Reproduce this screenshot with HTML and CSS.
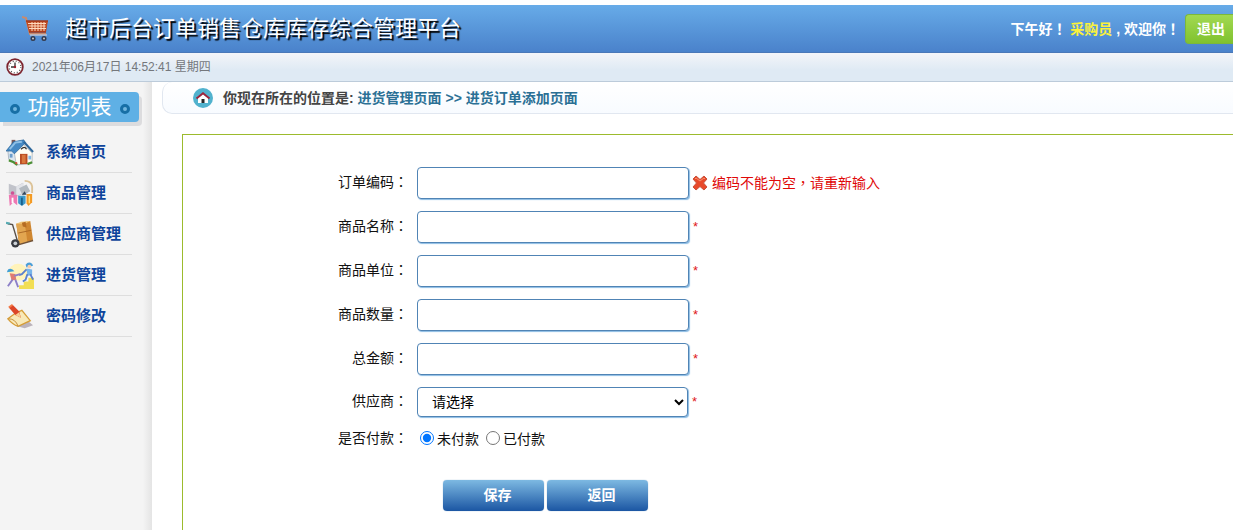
FILE: index.html
```html
<!DOCTYPE html>
<html lang="zh-CN">
<head>
<meta charset="utf-8">
<title>超市后台订单销售仓库库存综合管理平台</title>
<link rel="stylesheet" href="styles.css">
</head>
<body>
<header class="topbar">
  <svg class="cart" viewBox="0 0 28 28" aria-hidden="true">
    <path d="M0 2l4 1 4 16h16" fill="none" stroke="#c98a6d" stroke-width="2"/>
    <path d="M4 6h22l-2 11H7z" fill="#bd4a22"/>
    <path d="M6 8.500h18M6.500 11h17M7 13.500h17M10 7v9M13 7v9M16 7v9M19 7v9M22 7v9" stroke="#ffd9bd" stroke-width="1"/>
    <path d="M4 6h22M7 17h17" stroke="#a63a1b" stroke-width="1.500"/>
    <path d="M8 20h17" stroke="#b9c3d4" stroke-width="1.500"/>
    <circle cx="11" cy="23.500" r="2.500" fill="#33394a"/><circle cx="22" cy="23.500" r="2.500" fill="#33394a"/>
    <circle cx="11" cy="23.500" r="1" fill="#c7cbd5"/><circle cx="22" cy="23.500" r="1" fill="#c7cbd5"/>
  </svg>
  <h1 class="title">超市后台订单销售仓库库存综合管理平台</h1>
  <p class="welcome">下午好<span class="punct" lang="zh-TW">！</span> <span class="user">采购员</span> , 欢迎你<span class="punct" lang="zh-TW">！</span></p>
  <a class="logout" href="#">退出</a>
</header>
<div class="timebar">
  <svg class="clock" viewBox="0 0 18 18" aria-hidden="true">
    <circle cx="9" cy="9" r="7.800" fill="#fff" stroke="#7d2630" stroke-width="1.800"/>
    <circle cx="9" cy="9" r="5.800" fill="none" stroke="#555" stroke-width="1.200" stroke-dasharray="1 2.037"/>
    <path d="M9 4.500V9H5" fill="none" stroke="#333" stroke-width="1.300"/><circle cx="9" cy="9" r="1.200" fill="#a02030"/>
  </svg>
  <time>2021年06月17日 14:52:41 星期四</time>
</div>
<div class="columns">
  <aside class="sidebar">
    <h2 class="menu-title"><span class="dot"></span>功能列表<span class="dot"></span></h2>
    <nav>
      <ul class="menu">
        <li><a href="#">
          <svg class="menu-icon" viewBox="0 0 30 30" aria-hidden="true">
            <path d="M6 2h4v6H6z" fill="#7a5a58"/>
            <path d="M2 14l7-3 5 5v12L3 23z" fill="#dce7f0" stroke="#8293a5" stroke-width=".6"/>
            <path d="M9 16l10-9 9 9v11l-17 2z" fill="#fffdf4" stroke="#9aa0aa" stroke-width=".7"/>
            <path d="M0 14L8 4l11-2 2 3L9 17l-3-3z" fill="#4589c4" stroke="#2a6498" stroke-width=".7"/>
            <path d="M4 12l6-7 7-1" fill="none" stroke="#8fc0e6" stroke-width="2"/>
            <path d="M19 4l10 11" fill="none" stroke="#2d679b" stroke-width="2.200"/>
            <path d="M15 17h8v11h-8z" fill="#b94c22"/><path d="M17 18h4v9h-4z" fill="#d9773d"/>
            <path d="M24 19h3v4h-3z" fill="#83b7e5"/><path d="M4 17h3v4H4z" fill="#6b9dca"/>
            <path d="M3 24q5 1 9 5M23 28l5-2" stroke="#4c9135" stroke-width="2.400" fill="none"/>
            <circle cx="11" cy="27" r="1.200" fill="#d94a37"/><path d="M16 12q4-4 6 0" stroke="#333" stroke-width="1.300" fill="none"/>
          </svg>系统首页</a></li>
        <li><a href="#">
          <svg class="menu-icon" viewBox="0 0 30 30" aria-hidden="true">
            <path d="M3 5l8 3 7-4v12l-7 3-8-3z" fill="#c1c3ca"/><path d="M11 8l8-4v11l-8 3z" fill="#e2e4e9"/>
            <path d="M14 10l8-4 4 7-8 5z" fill="#b3bac0"/><path d="M20 2q7 0 8 6v7" fill="none" stroke="#dcc398" stroke-width="2"/>
            <path d="M3 17h9v11l-4-3-4 4z" fill="#ee79b3"/><path d="M6 20h2v6H6z" fill="#fff"/>
            <circle cx="7" cy="15" r="2" fill="#d15196"/>
            <path d="M13 18h8v8l-4 3-4-3z" fill="#3f9bca"/><path d="M16 20h2v8h-2z" fill="#17608d"/>
            <path d="M22 16h6v9l-4 4-2-3z" fill="#f49a24"/><path d="M25 18v8" stroke="#ffe078" stroke-width="1.500"/>
            <path d="M17 17l3-4 2 4" fill="#33475c"/>
          </svg>商品管理</a></li>
        <li><a href="#">
          <svg class="menu-icon" viewBox="0 0 30 30" aria-hidden="true">
            <path d="M11 4l15-3 3 21-15 4z" fill="#cf8731"/><path d="M11 4l9-1 3 21-9 2z" fill="#e2a650"/>
            <path d="M11 4l5-2 10-1-6 3z" fill="#f1c778"/><path d="M17 3l4-1 1 6-4-1z" fill="#b56c22"/><path d="M13 14l14-3" stroke="#a86524"/>
            <path d="M2 4l5 1 6 20" fill="none" stroke="#5a5149" stroke-width="1.500"/>
            <path d="M0 3l4 1" stroke="#56aab2" stroke-width="2.500"/><path d="M12 27l17-5" stroke="#705238" stroke-width="1.500"/>
            <circle cx="10" cy="25" r="4.500" fill="#383b41"/><circle cx="10" cy="25" r="2" fill="#cbd0d5"/>
          </svg>供应商管理</a></li>
        <li><a href="#">
          <svg class="menu-icon" viewBox="0 0 30 30" aria-hidden="true">
            <ellipse cx="13" cy="12" rx="10" ry="9" fill="#fff3ba"/><path d="M14 30v-4h5v-4h5v-4h6v12z" fill="#f2de54"/>
            <path d="M21 4q3-4 7-1l1 2-7 2z" fill="#4a9fd8"/><circle cx="25" cy="6" r="2" fill="#f6cdb0"/>
            <path d="M22 8l6 1v6l-5 1z" fill="#78b5ea"/>
            <path d="M26 14l3 6M23 14l-2 6-3 2M22 9l-5 5-3 1" stroke="#5b80cd" stroke-width="2" fill="none"/>
            <path d="M1 12q1-5 6-3l2 2z" fill="#43a0d4"/><path d="M4 13l6 1 1 6-5 1z" fill="#e07c72"/>
            <path d="M9 16l6-2M7 20l-5 7M10 20l3 8" stroke="#8d80c8" stroke-width="2" fill="none"/>
          </svg>进货管理</a></li>
        <li><a href="#">
          <svg class="menu-icon" viewBox="0 0 30 30" aria-hidden="true">
            <path d="M12 26l10-7 7 6-9 3z" fill="#bbb3bb"/>
            <path d="M2 18l8-6 7-3 9 11-13 6q-6-2-11-8z" fill="#f8e9b8" stroke="#d69d36" stroke-width="1.400"/>
            <path d="M3 18q7 0 10 8" fill="none" stroke="#c58a35"/>
            <path d="M3 6l4-3 7 7 2 7-6-3z" fill="#dc4528"/><path d="M10 14l4-3 2 6z" fill="#f8ce94"/><path d="M3 6l4-3" stroke="#f37a47" stroke-width="2"/>
          </svg>密码修改</a></li>
      </ul>
    </nav>
  </aside>
  <main class="content">
    <div class="location">
      <svg class="home" viewBox="0 0 20 20" aria-hidden="true">
        <circle cx="10" cy="10" r="10" fill="#51b2ce"/><path d="M5 10l5-4 5 4v5H5z" fill="#fff"/>
        <path d="M3.500 10.500L10 5.300l6.500 5.200" fill="none" stroke="#9e243c" stroke-width="1.900"/><path d="M8.500 11h3v4h-3z" fill="#252525"/>
      </svg>
      <strong>你现在所在的位置是: <span class="path">进货管理页面 &gt;&gt; 进货订单添加页面</span></strong>
    </div>
    <form class="order">
      <div class="row"><label for="code">订单编码<span class="punct" lang="zh-TW">：</span></label><input class="field" id="code" type="text">
        <span class="error"><svg class="cross" viewBox="0 0 16 16" aria-hidden="true"><path d="M4 1l4 3.500L12 1l3 3-3.500 4 3.500 4-3 3-4-3.500L4 15l-3-3 3.500-4L1 4z" fill="#e8492b" stroke="#c9523c" stroke-linejoin="round"/><path d="M3 4l1-1 4 3 4-3 1 1" fill="none" stroke="#f89270"/></svg><span>编码不能为空<span class="punct" lang="zh-TW">，</span>请重新输入</span></span></div>
      <div class="row"><label for="name">商品名称<span class="punct" lang="zh-TW">：</span></label><input class="field" id="name" type="text"><span class="star">*</span></div>
      <div class="row"><label for="unit">商品单位<span class="punct" lang="zh-TW">：</span></label><input class="field" id="unit" type="text"><span class="star">*</span></div>
      <div class="row"><label for="count">商品数量<span class="punct" lang="zh-TW">：</span></label><input class="field" id="count" type="text"><span class="star">*</span></div>
      <div class="row"><label for="total">总金额<span class="punct" lang="zh-TW">：</span></label><input class="field" id="total" type="text"><span class="star">*</span></div>
      <div class="row"><label for="provider">供应商<span class="punct" lang="zh-TW">：</span></label><select class="field select" id="provider"><option>请选择</option></select><span class="star">*</span></div>
      <div class="row radios" role="radiogroup" aria-labelledby="pay"><span class="label" id="pay">是否付款<span class="punct" lang="zh-TW">：</span></span>
        <input type="radio" name="pay" id="unpaid" checked><label for="unpaid">未付款</label>
        <input type="radio" name="pay" id="paid"><label for="paid">已付款</label></div>
      <div class="actions"><button type="button">保存</button><button type="button">返回</button></div>
    </form>
  </main>
</div>
</body>
</html>
```
FILE: styles.css
```css
* { box-sizing: border-box; }
body {
  margin: 0;
  min-height: 100vh;
  display: flex;
  flex-direction: column;
  padding-top: 5px;
  overflow: hidden;
  background: #fff;
  color: #111;
  font: 14px/20px "Liberation Sans", "Noto Sans CJK SC", sans-serif;
}
h1, h2, p, ul { margin: 0; padding: 0; }
a { text-decoration: none; }
svg { flex: none; }
.punct { font-family: "Noto Sans CJK TC", sans-serif; line-height: 1; }

.topbar {
  display: flex;
  align-items: center;
  height: 48px;
  padding-left: 22px;
  background: linear-gradient(#67abe8, #4a82cb);
  border-bottom: 1px solid #4a78b8;
  color: #fff;
}
.cart { width: 28px; height: 28px; }
.title {
  margin-left: 15px;
  font-size: 22px;
  line-height: 32px;
  font-weight: 400;
  text-shadow: 2px 2px 1px #000;
  white-space: nowrap;
}
.welcome { margin-left: auto; font-weight: 700; white-space: nowrap; }
.user { color: #fbf23a; }
.logout {
  width: 48px;
  height: 30px;
  margin-left: 5px;
  padding-left: 11px;
  border: 1px solid #7cb83a;
  border-right: 0;
  border-radius: 4px 0 0 4px;
  background: linear-gradient(#a2d951, #80c22f);
  color: #fff;
  font-weight: 700;
  line-height: 28px;
}

.timebar {
  display: flex;
  align-items: center;
  gap: 8px;
  height: 29px;
  padding-left: 6px;
  background: linear-gradient(#f3f5f9, #dfeaf4 60%);
  border-bottom: 1px solid #bccbda;
  color: #74777c;
  font-size: 12px;
}
.clock { width: 18px; height: 18px; }

.columns { display: flex; flex: 1; }
.sidebar {
  flex: none;
  width: 152px;
  padding-top: 10px;
  background: linear-gradient(90deg, #f4f4f4 94%, #e4e4e4);
}
.menu-title {
  display: flex;
  align-items: center;
  justify-content: center;
  gap: 8px;
  width: 139px;
  height: 30px;
  border-radius: 0 4px 4px 0;
  background: #5fb0e5;
  box-shadow: 3px 4px 0 #dcdcde;
  color: #fff;
  font-size: 21px;
  font-weight: 400;
  white-space: nowrap;
}
.dot { width: 10px; height: 10px; margin-top: 4px; border: 3px solid #176fa6; border-radius: 50%; background: #72b7df; }
.menu { margin: 10px 20px 0 6px; list-style: none; }
.menu li { height: 41px; border-bottom: 1px solid #dedede; }
.menu a {
  display: flex;
  align-items: center;
  gap: 12px;
  height: 40px;
  color: #0e449b;
  font-size: 15px;
  font-weight: 700;
  white-space: nowrap;
}
.menu-icon { width: 28px; height: 28px; }

.content { flex: 1; min-width: 0; padding-left: 10px; }
.location {
  display: flex;
  align-items: center;
  gap: 10px;
  height: 32px;
  padding-left: 30px;
  border: 1px solid #e1e7f0;
  border-width: 0 0 1px 1px;
  border-radius: 10px 0 0 10px;
  background: linear-gradient(#fff, #f8fbff);
  color: #444;
}
.home { width: 20px; height: 20px; }
.path { color: #2b7095; }

.order {
  display: flex;
  flex-direction: column;
  gap: 12px;
  min-height: 396px;
  margin: 20px 0 0 20px;
  padding-top: 32px;
  border: 1px solid #9cbb2d;
  border-width: 1px 0 0 1px;
}
.row { display: flex; align-items: center; }
.row > label:first-child, .label { width: 225px; margin-right: 9px; padding-bottom: 2px; text-align: right; }
.field {
  width: 272px;
  height: 32px;
  border: 1px solid #5084b5;
  border-radius: 4px;
  background: #fff;
  box-shadow: 1px 1px 1px #8bbce4;
  color: #000;
  font: inherit;
}
.select { width: 271px; height: 30px; padding-left: 10px; }
.star { margin-left: 4px; color: #e01818; font-size: 13px; }
.error { display: flex; align-items: center; gap: 4px; margin-left: 3px; color: #e00808; }
.cross { width: 16px; height: 16px; }
.radios { height: 20px; }
.radios input { width: 14px; height: 14px; margin: 0 3px 2px; }
.radios label { margin-right: 4px; }
.actions { display: flex; gap: 3px; margin: 19px 0 0 260px; }
.actions button {
  width: 101px;
  height: 31px;
  padding: 0 0 2px 8px;
  border: 0;
  border-radius: 4px;
  background: linear-gradient(#7db9e2, #1b56a3);
  box-shadow: 0 0 1px #6c9ac4;
  color: #fff;
  font: inherit;
  font-weight: 700;
}
```
